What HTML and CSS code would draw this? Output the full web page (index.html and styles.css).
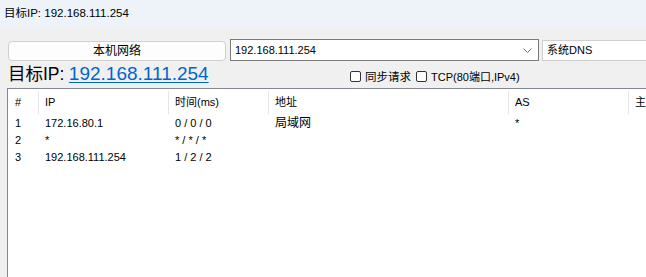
FILE: index.html
```html
<!DOCTYPE html>
<html lang="zh">
<head>
<meta charset="utf-8">
<title>目标IP</title>
<link rel="stylesheet" href="styles.css">
</head>
<body>
<div class="titlebar">目标IP: 192.168.111.254</div>
<div class="toolbar">
  <div class="btn">本机网络</div>
  <div class="combo">
    <span class="combo-text">192.168.111.254</span>
    <svg class="chev" width="9" height="5" viewBox="0 0 9 5"><path d="M0.5 0.5 L4.5 4.5 L8.5 0.5" fill="none" stroke="#707070" stroke-width="1"/></svg>
  </div>
  <div class="dns">系统DNS</div>
</div>
<div class="inforow">
  <div class="target"><span class="target-label">目标IP:</span> <a class="target-link" href="#">192.168.111.254</a></div>
  <div class="checks">
    <label class="check"><span class="box"></span>同步请求</label>
    <label class="check"><span class="box"></span>TCP(80端口,IPv4)</label>
  </div>
</div>
<div class="list">
  <div class="head">
    <div class="hc first">#</div>
    <div class="hc">IP</div>
    <div class="hc">时间(ms)</div>
    <div class="hc">地址</div>
    <div class="hc">AS</div>
    <div class="hc">主</div>
  </div>
  <div class="row">
    <div class="c">1</div><div class="c">172.16.80.1</div><div class="c">0 / 0 / 0</div><div class="c cjk">局域网</div><div class="c">*</div><div class="c"></div>
  </div>
  <div class="row">
    <div class="c">2</div><div class="c">*</div><div class="c">* / * / *</div><div class="c"></div><div class="c"></div><div class="c"></div>
  </div>
  <div class="row">
    <div class="c">3</div><div class="c">192.168.111.254</div><div class="c">1 / 2 / 2</div><div class="c"></div><div class="c"></div><div class="c"></div>
  </div>
</div>
</body>
</html>
```

FILE: styles.css
```css
html, body {
  margin: 0;
  padding: 0;
}
body {
  width: 646px;
  height: 277px;
  overflow: hidden;
  background: #f0f0f0;
  font-family: "Liberation Sans", "Noto Sans CJK SC", sans-serif;
  color: #000;
  display: flex;
  flex-direction: column;
}
.titlebar {
  height: 28px;
  flex: none;
  background: #eef3f9;
  font-size: 11.5px;
  line-height: 26px;
  padding-left: 4px;
  white-space: nowrap;
}
.toolbar {
  display: flex;
  align-items: center;
  gap: 3px;
  margin-top: 11px;
  padding-left: 8px;
  height: 22px;
  flex: none;
  white-space: nowrap;
}
.toolbar > * {
  flex: none;
}
.btn {
  width: 216px;
  height: 18px;
  border: 1px solid #d0d0d0;
  border-radius: 4px;
  background: #fdfdfd;
  font-size: 12px;
  line-height: 18px;
  text-align: center;
  margin-right: 1px;
  margin-top: 2px;
}
.combo {
  width: 297px;
  height: 20px;
  border: 1px solid #7a7a7a;
  background: #fff;
  display: flex;
  align-items: center;
  justify-content: space-between;
  padding: 0 6px 0 4px;
}
.combo-text {
  font-size: 11px;
}
.chev {
  display: block;
}
.dns {
  width: 120px;
  height: 19px;
  border: 1px solid #cfcfcf;
  background: #fff;
  font-size: 11px;
  line-height: 19px;
  padding-left: 4px;
  margin-top: 1px;
}
.inforow {
  display: flex;
  align-items: center;
  height: 27px;
  flex: none;
  padding-left: 8px;
  white-space: nowrap;
}
.target {
  width: 342px;
  flex: none;
  line-height: 26px;
}
.target-label {
  font-size: 17.5px;
}
.target-link {
  font-size: 19px;
  color: #0066cc;
  text-decoration: underline;
  text-underline-offset: 2px;
}
.checks {
  display: flex;
  gap: 5px;
  font-size: 11px;
  padding-top: 3px;
}
.check {
  display: flex;
  align-items: center;
  gap: 4px;
}
.check:first-child {
  font-size: 11.5px;
}
.box {
  width: 11px;
  height: 11px;
  border: 1px solid #333;
  border-radius: 2px;
  box-sizing: border-box;
  background: #fff;
}
.list {
  flex: 1;
  margin-left: 7px;
  border-left: 1px solid #828790;
  border-top: 1px solid #828790;
  background: #fff;
  white-space: nowrap;
}
.head, .row {
  display: grid;
  grid-template-columns: 30px 130px 100px 240px 120px 1fr;
}
.head {
  padding: 2px 0 1px;
  height: 23px;
  font-size: 11px;
}
.hc {
  border-left: 1px solid #e5e5e5;
  padding-left: 6px;
  line-height: 23px;
  overflow: hidden;
}
.hc.first {
  border-left: none;
  padding-left: 7px;
}
.row {
  height: 17px;
  font-size: 11px;
  line-height: 17px;
}
.c {
  padding-left: 7px;
  overflow: hidden;
}
.c.cjk {
  font-size: 12px;
}
```
